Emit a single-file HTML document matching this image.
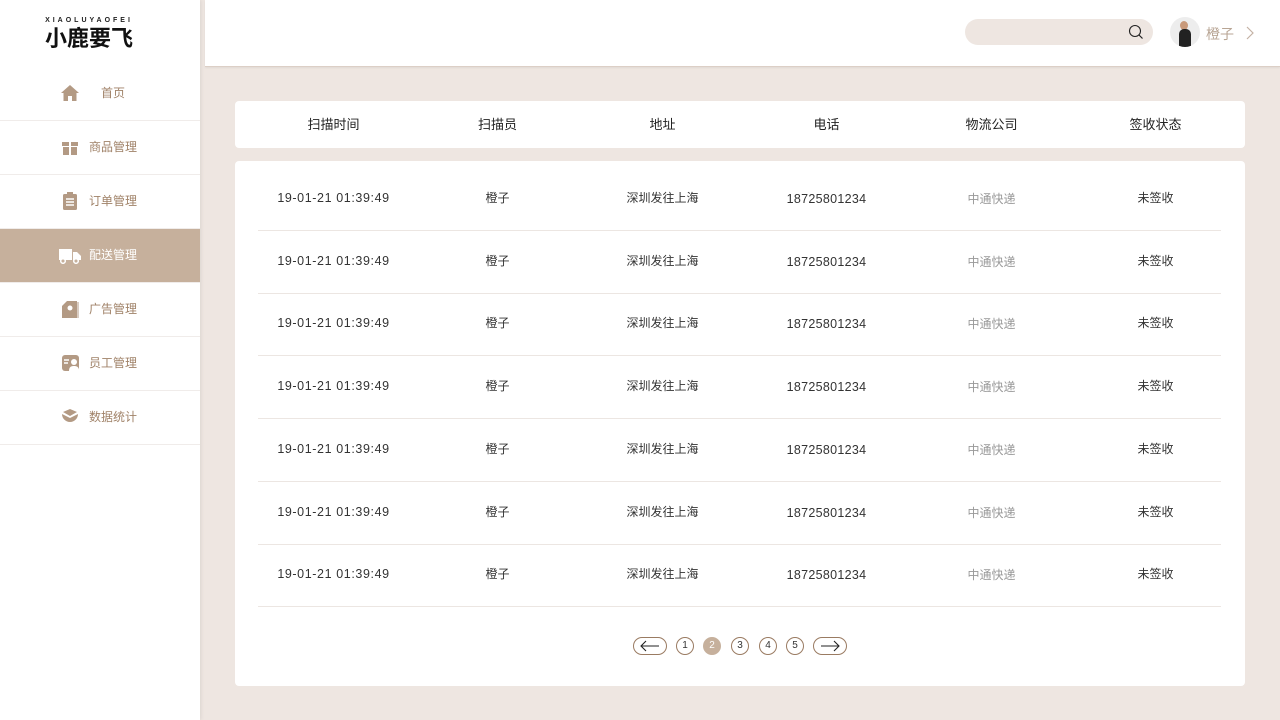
<!DOCTYPE html>
<html><head><meta charset="utf-8"><style>
*{margin:0;padding:0;box-sizing:border-box}
body{width:1280px;height:720px;background:#EEE6E1;font-family:"Liberation Sans","Noto Sans CJK SC",sans-serif;position:relative;overflow:hidden}
.side{position:absolute;left:0;top:0;width:200px;height:720px;background:#fff;box-shadow:1px 0 4px rgba(0,0,0,.08)}
.logo{position:absolute;left:42px;top:17px;width:94px;text-align:center}
.logo .en{font-size:7px;letter-spacing:3px;color:#222;font-weight:bold;line-height:8px}
.logo .cn{font-size:22px;color:#111;line-height:26px;letter-spacing:0;margin-top:1px;font-weight:bold}
.nav{position:absolute;left:0;width:200px;height:54px;border-bottom:1px solid #F0ECEA;color:#A08268;font-size:12px}
.nav span{position:absolute;left:89px;top:18px;line-height:16px}
.nav svg{position:absolute;left:61px;top:17px}
.nav.act{background:#C6B09C;color:#fff}
.head{position:absolute;left:205px;top:0;width:1075px;height:67px;background:#fff;border-bottom:1px solid #DCCFC6;box-shadow:0 1px 2px rgba(0,0,0,.06)}
.search{position:absolute;left:760px;top:19px;width:188px;height:26px;border-radius:13px;background:#EEE6E1}
.card{position:absolute;background:#fff;border-radius:4px}
.th{position:absolute;top:0;height:47px;line-height:47px;font-size:13px;color:#222;text-align:center;width:165px}
.td{position:absolute;font-size:12px;color:#333;text-align:center;width:165px;line-height:16px;height:16px}
.line{position:absolute;left:23px;width:963px;height:1px;background:#ECE6E2}
.pg{position:absolute;top:637px;height:18px;border:1px solid #9A7B62;border-radius:9px;font-size:10px;text-align:center;line-height:16px;color:#333}
</style></head><body>
<div class="side">
<div class="logo"><div class="en">XIAOLUYAOFEI</div><div class="cn">小鹿要飞</div></div>
<div class="nav" style="top:67px"><svg width="18" height="18" viewBox="0 0 18 18"><path d="M9 1L0 9h2.5v8h4.5v-5h4v5h4.5V9H18z" fill="#B39A84"/></svg><span style="left:101px">首页</span></div>
<div class="nav" style="top:121px"><svg width="18" height="18" viewBox="0 0 18 18"><path d="M1 4h16v4H1zM2 9h14v8H2z" fill="#B39A84"/><path d="M8 3h2v14H8z" fill="#fff"/></svg><span>商品管理</span></div>
<div class="nav" style="top:175px"><svg width="18" height="18" viewBox="0 0 18 18"><rect x="2" y="2" width="14" height="16" rx="1.5" fill="#B39A84"/><path d="M5 7h8M5 10h8M5 13h8" stroke="#fff" stroke-width="1.4"/><rect x="6" y="0" width="6" height="3" fill="#B39A84"/></svg><span>订单管理</span></div>
<div class="nav act" style="top:229px"><svg width="22" height="18" viewBox="0 0 22 18" style="left:59px"><path d="M0 3h13v11H0zM14 6h4l4 4v4h-8z" fill="#fff"/><circle cx="4" cy="15" r="2.3" fill="#C6B09C" stroke="#fff" stroke-width="1.5"/><circle cx="17" cy="15" r="2.3" fill="#C6B09C" stroke="#fff" stroke-width="1.5"/></svg><span>配送管理</span></div>
<div class="nav" style="top:283px"><svg width="20" height="18" viewBox="0 0 20 18"><path d="M1 6l5-5h10v17H1z" fill="#B39A84"/><circle cx="9" cy="8" r="2.5" fill="#fff"/><path d="M17 2v16" stroke="#B39A84"/></svg><span>广告管理</span></div>
<div class="nav" style="top:337px"><svg width="20" height="18" viewBox="0 0 20 18"><rect x="1" y="1" width="17" height="16" rx="3" fill="#B39A84"/><path d="M3 6h5M3 9h4" stroke="#fff" stroke-width="1.4"/><circle cx="13" cy="8" r="3" fill="#fff"/><path d="M8 17c0-4 2-5 5-5s5 1 5 5z" fill="#fff"/></svg><span>员工管理</span></div>
<div class="nav" style="top:391px"><svg width="18" height="18" viewBox="0 0 18 18"><path d="M1 6a8 8 0 0 0 16 0l-8 4z" fill="#B39A84"/><path d="M2 4l7-3 7 3-7 4z" fill="#B39A84"/></svg><span>数据统计</span></div>
</div>
<div class="head">
<div class="search"><svg width="16" height="16" viewBox="0 0 16 16" style="position:absolute;left:163px;top:5px"><circle cx="7" cy="7" r="5.5" fill="none" stroke="#222" stroke-width="1.1"/><path d="M11 11l3.5 3.5" stroke="#222" stroke-width="1.2"/></svg></div>
<div style="position:absolute;left:965px;top:17px;width:30px;height:30px;border-radius:50%;background:#EDEDED;overflow:hidden"><div style="position:absolute;left:10px;top:4px;width:8px;height:9px;border-radius:50%;background:#c99a7b"></div><div style="position:absolute;left:9px;top:12px;width:12px;height:20px;background:#222;border-radius:5px 5px 0 0"></div></div>
<div style="position:absolute;left:1001px;top:24px;font-size:14px;color:#B8A594">橙子</div>
<svg width="10" height="14" viewBox="0 0 10 14" style="position:absolute;left:1040px;top:26px"><path d="M2 1l6 6-6 6" fill="none" stroke="#C4B2A4" stroke-width="1.2"/></svg>
</div>
<div class="card" style="left:235px;top:101px;width:1010px;height:47px">
<div class="th" style="left:16px">扫描时间</div><div class="th" style="left:180px">扫描员</div><div class="th" style="left:345px">地址</div><div class="th" style="left:509px">电话</div><div class="th" style="left:674px">物流公司</div><div class="th" style="left:838px">签收状态</div>
</div>
<div class="card" style="left:235px;top:161px;width:1010px;height:525px" id="tb">
</div>
<script>
var tb=document.getElementById('tb'),h='';
for(var i=0;i<7;i++){var c=37+i*62.7,y=c-8;
h+='<div class="td" style="left:16px;top:'+y+'px;letter-spacing:0.6px;font-size:12.5px">19-01-21 01:39:49</div><div class="td" style="left:180px;top:'+y+'px">橙子</div><div class="td" style="left:345px;top:'+y+'px">深圳发往上海</div><div class="td" style="left:509px;top:'+(y+1)+'px;font-size:12.5px;letter-spacing:0.3px">18725801234</div><div class="td" style="left:674px;top:'+(y+1)+'px;color:#999">中通快递</div><div class="td" style="left:838px;top:'+y+'px">未签收</div><div class="line" style="top:'+(69+i*62.7)+'px"></div>';}
tb.innerHTML=h;
</script>
<div class="pg" style="left:633px;width:34px"><svg width="24" height="12" viewBox="0 0 24 12" style="margin-top:2px"><path d="M3 6h18M8 1L3 6l5 5" fill="none" stroke="#222" stroke-width="1.1"/></svg></div>
<div class="pg" style="left:676px;width:18px">1</div>
<div class="pg" style="left:703px;width:18px;background:#C6B09C;border-color:#C6B09C;color:#fff">2</div>
<div class="pg" style="left:731px;width:18px">3</div>
<div class="pg" style="left:759px;width:18px">4</div>
<div class="pg" style="left:786px;width:18px">5</div>
<div class="pg" style="left:813px;width:34px"><svg width="24" height="12" viewBox="0 0 24 12" style="margin-top:2px"><path d="M3 6h18M16 1l5 5-5 5" fill="none" stroke="#222" stroke-width="1.1"/></svg></div>
</body></html>
